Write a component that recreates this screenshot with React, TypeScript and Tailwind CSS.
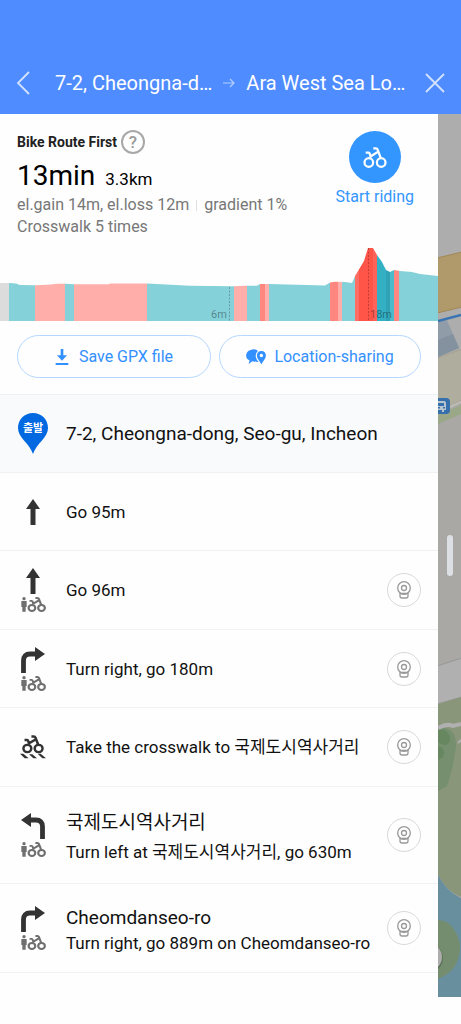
import React from "react";

type Maneuver = "straight" | "right" | "left" | "crosswalk";

type Step = {
  maneuver: Maneuver;
  title?: string;
  text: string;
  shared?: boolean;
  camera?: boolean;
};

const steps: Step[] = [
  { maneuver: "straight", text: "Go 95m" },
  { maneuver: "straight", text: "Go 96m", shared: true, camera: true },
  { maneuver: "right", text: "Turn right, go 180m", shared: true, camera: true },
  { maneuver: "crosswalk", text: "Take the crosswalk to 국제도시역사거리", camera: true },
  {
    maneuver: "left",
    title: "국제도시역사거리",
    text: "Turn left at 국제도시역사거리, go 630m",
    shared: true,
    camera: true,
  },
  {
    maneuver: "right",
    title: "Cheomdanseo-ro",
    text: "Turn right, go 889m on Cheomdanseo-ro",
    shared: true,
    camera: true,
  },
];

function BikeShape({ weight }: { weight: number }) {
  return (
    <g fill="none" stroke="currentColor" strokeWidth={weight} strokeLinejoin="round">
      <circle cx="16" cy="45" r="12.5" />
      <circle cx="52" cy="45" r="12.5" />
      <path d="M29 4h7q5 0 6 4l9 25M7 16h8q3 0 4 4l3 11M19 29l23-15" />
    </g>
  );
}

function BikeIcon() {
  return (
    <svg viewBox="0 0 68 61" className="h-[21px] w-6" aria-hidden="true">
      <BikeShape weight={6.5} />
    </svg>
  );
}

function SharedPathIcon() {
  return (
    <svg viewBox="0 0 75 45" className="h-[15px] w-[25px] text-[#6f6f6f]" aria-hidden="true">
      <circle cx="9" cy="5" r="5" fill="currentColor" />
      <path d="M1 12h16v18h-3v14H4V30H1z" fill="currentColor" />
      <g transform="translate(20 0) scale(.8 .73)">
        <BikeShape weight={8} />
      </g>
    </svg>
  );
}

function ManeuverIcon({ kind }: { kind: Maneuver }) {
  if (kind === "straight") {
    return (
      <svg viewBox="0 0 24 26" className="h-[26px] w-6" aria-hidden="true">
        <path d="M12 0l7 10h-4.500V26h-5V10H5z" fill="#333333" />
      </svg>
    );
  }
  if (kind === "crosswalk") {
    return (
      <svg viewBox="0 0 78 70" className="h-6 w-[26px] text-[#333333]" aria-hidden="true">
        <g transform="translate(7 0) scale(.94 .88)">
          <BikeShape weight={8} />
        </g>
        <g fill="currentColor">
          <path d="M0 55h10l16 14H14zM27 57h10l14 12H40zM53 55h9l16 14H67z" />
        </g>
      </svg>
    );
  }
  return (
    <svg viewBox="0 0 24 26" className={kind === "left" ? "h-[26px] w-6 -scale-x-100" : "h-[26px] w-6"} aria-hidden="true">
      <path d="M2.500 26V13.500q0-6.500 6.500-6.500h6" fill="none" stroke="#333333" strokeWidth="4.800" />
      <path d="M14 0l10 7-10 7z" fill="#333333" />
    </svg>
  );
}

function CameraIcon() {
  return (
    <svg viewBox="0 0 14 18" className="h-[18px] w-3.5" fill="none" stroke="#999999" strokeWidth="1.300" aria-hidden="true">
      <circle cx="7" cy="7" r="6.300" />
      <circle cx="7" cy="7" r="2.500" />
      <path d="M3 12.500h8M3 12v3q0 2 2 2h4q2 0 2-2v-3" />
    </svg>
  );
}

const profile =
  "M0 36L9 36 16 36.500 20 38 35 38.300 48 37.700 58 36.800 65 36.800 74 37.300 109 37.300 110 36.500 147 36.500 190 38.700 229 39.300 234 39.300 245 38.800 257 38.800 260 37 269 37 325 38.500 330 35.500 335 34.700 345 35 352 36 355 29 364 14 368 1 373 1 377 8 382 15 386 23 390 25 394 23 400 24 412 25 420 27 438 29V74H0z";

const segments = [
  { x: 0, w: 9, c: "#dcdcdc" },
  { x: 9, w: 26, c: "#84d1da" },
  { x: 35, w: 30, c: "#ffaeaa" },
  { x: 65, w: 9, c: "#84d1da" },
  { x: 74, w: 73, c: "#ffaeaa" },
  { x: 147, w: 87, c: "#84d1da" },
  { x: 234, w: 13, c: "#ffaeaa" },
  { x: 247, w: 13, c: "#84d1da" },
  { x: 260, w: 5, c: "#ff8780" },
  { x: 265, w: 4, c: "#ffaeaa" },
  { x: 269, w: 61, c: "#84d1da" },
  { x: 330, w: 8, c: "#ff8780" },
  { x: 338, w: 4, c: "#ffaeaa" },
  { x: 342, w: 13, c: "#84d1da" },
  { x: 355, w: 4, c: "#ff6e64" },
  { x: 359, w: 14, c: "#ff5549" },
  { x: 373, w: 4, c: "#ff6258" },
  { x: 377, w: 9, c: "#34b0c5" },
  { x: 386, w: 4, c: "#2fa3b5" },
  { x: 390, w: 4, c: "#4bbac9" },
  { x: 394, w: 5, c: "#ff8780" },
  { x: 399, w: 39, c: "#84d1da" },
];

function ElevationChart() {
  return (
    <svg viewBox="0 0 438 74" className="mt-[10px] block w-full" role="img" aria-label="Elevation profile">
      <defs>
        <clipPath id="profile">
          <path d={profile} />
        </clipPath>
      </defs>
      <g clipPath="url(#profile)" shapeRendering="crispEdges">
        {segments.map((s) => (
          <rect key={s.x} x={s.x} y="0" width={s.w} height="74" fill={s.c} />
        ))}
      </g>
      <g stroke="#000000" strokeOpacity=".25" strokeDasharray="2 1.500">
        <path d="M229.500 40V74M368.500 1V74" />
      </g>
      <g fill="#000000" fillOpacity=".38" fontSize="11">
        <text x="211" y="71">6m</text>
        <text x="370" y="71">18m</text>
      </g>
    </svg>
  );
}

function MapStrip() {
  return (
    <svg viewBox="0 0 23 883" preserveAspectRatio="none" className="absolute inset-0 h-full w-full" aria-hidden="true">
      <path fill="#adadad" d="M0 0h23v883H0z" />
      <path fill="#b09a6c" stroke="#a18853" d="M-1 144l25-6v55L-1 199z" />
      <path fill="#909da8" d="M0 207l8-3 13 30-21 9z" />
      <path fill="#84929f" d="M0 226l15-6 6 14-21 9z" />
      <path stroke="#3a74b2" strokeWidth="2.500" d="M0 207l23-6" />
      <path fill="#afad9e" stroke="#a49a88" strokeWidth=".7" d="M-1 244l25-9v51l-25 13z" />
      <path fill="#a9a8a4" d="M0 299l23-12v265H0z" />
      <path fill="#9aa887" d="M0 301l23-10v9L0 310z" />
      <path stroke="#bcbcb9" strokeWidth="2" d="M10 294l13-6" />
      <rect x="-8" y="284" width="20" height="16" rx="4" fill="#356fac" />
      <path fill="#b8c4ce" d="M0 287h6q2 0 2 2v7H6v2H4v-2H0z" />
      <path fill="#356fac" d="M0 289h6v3H0zM0 293h2v1.500H0zM5 293h2v1.500H5z" />
      <path fill="#b0b0b0" stroke="#979797" d="M-1 552l25-8v39l-25 7z" />
      <path fill="#89967a" d="M0 590l23-7v200Q9 778 0 761z" />
      <path fill="#758f6f" d="M0 614q18-2 18 18-3 24-9 40l-9 5z" />
      <path fill="#668760" d="M0 617q8-4 12 6 0 9-6 8-3-1-6-3zM0 632q9 3 5 11l-5 3z" />
      <path fill="none" stroke="#b0b0b0" strokeWidth="4" d="M0 614q9-5 15-2l8-2" />
      <path stroke="#b0b0b0" strokeWidth="2" d="M20 629l3-3" />
      <path fill="#688f9e" d="M0 761q9 17 23 23v99H0z" />
      <path fill="#758d6f" d="M0 806q16 0 22 24 1 26-22 35z" />
      <circle cx="-10" cy="844" r="15" fill="#5c7258" />
      <circle cx="-10" cy="843" r="14" fill="#adadad" />
    </svg>
  );
}

export default function App() {
  return (
    <div className="flex min-h-screen flex-col bg-[#fefefe] font-['Roboto','Noto_Sans_CJK_KR',sans-serif] text-[#111111]">
      <header className="flex h-[114px] shrink-0 items-end bg-[#4f8cff] px-4 pb-[15px] text-white">
        <button type="button" aria-label="Back" className="flex h-8 w-[39px] items-center">
          <svg viewBox="0 0 14 24" className="h-6 w-3.5" fill="none" stroke="#d3e2ff" strokeWidth="1.800" aria-hidden="true">
            <path d="M13 1L2 12l11 11" />
          </svg>
        </button>
        <h1 className="flex flex-1 items-center text-[20px] leading-8 whitespace-nowrap">
          <span>7-2, Cheongna-d…</span>
          <svg viewBox="0 0 12 10" className="mx-[11px] h-2.5 w-3" fill="none" stroke="#b4cfff" strokeWidth="1.200" aria-label="to">
            <path d="M0 5h11M7 1l4 4-4 4" />
          </svg>
          <span>Ara West Sea Lo…</span>
        </h1>
        <button type="button" aria-label="Close" className="flex h-8 w-5 items-center justify-center">
          <svg viewBox="0 0 20 20" className="h-5 w-5" fill="none" stroke="#d3e2ff" strokeWidth="1.800" aria-hidden="true">
            <path d="M1 1l18 18M19 1L1 19" />
          </svg>
        </button>
      </header>

      <div className="flex flex-1 pb-[27px]">
        <main className="min-w-0 flex-1">
          <section className="flex justify-between pt-4 pr-6 pl-[17px]">
            <div>
              <div className="flex items-center gap-1">
                <h2 className="text-[14px] leading-6 font-bold text-[#222222]">Bike Route First</h2>
                <button type="button" aria-label="Help" className="flex h-6 w-6 items-center justify-center rounded-full border-2 border-[#a8a8a8] text-[17px] leading-5 font-medium text-[#999999]">
                  ?
                </button>
              </div>
              <p className="flex items-baseline gap-[10px] pt-[7px] leading-[30px] text-black">
                <span className="text-[28px]">13min</span>
                <span className="text-[17px]">3.3km</span>
              </p>
              <p className="flex items-center text-[16px] leading-[22px] text-[#777777]">
                <span>el.gain 14m, el.loss 12m</span>
                <span className="mx-[7px] h-[11px] w-px bg-[#e0e0e0]" />
                <span>gradient 1%</span>
              </p>
              <p className="text-[16px] leading-[21px] text-[#777777]">Crosswalk 5 times</p>
            </div>
            <button type="button" className="flex flex-col items-center self-start pt-px text-[16px] leading-6 text-[#3396ff]">
              <span className="mb-[2px] flex h-[52px] w-[52px] items-center justify-center rounded-full bg-[#3396ff] text-white">
                <BikeIcon />
              </span>
              Start riding
            </button>
          </section>

          <ElevationChart />

          <div className="flex gap-2 px-[17px] pt-[14px] pb-4 text-[16px] text-[#3390ff]">
            <button type="button" className="flex h-[43px] w-0 grow-[24] items-center justify-center gap-[10px] rounded-full border border-[#b5d7ff]">
              <svg viewBox="0 0 40 48" className="h-4 w-3.5" fill="currentColor" aria-hidden="true">
                <path d="M16 0h8v19h11L20 35 5 19h11zM1 42h38v6H1z" />
              </svg>
              Save GPX file
            </button>
            <button type="button" className="flex h-[43px] w-0 grow-[25] items-center justify-center gap-2 rounded-full border border-[#b5d7ff]">
              <svg viewBox="0 0 57 46" className="h-4 w-5" fill="currentColor" aria-hidden="true">
                <path d="M21 1Q29 0 34 6q-8 6-6 17 2 9 8 14-5 1-9-1-5 1-9-1L7 43l3-10Q0 29 0 18 2 3 21 1z" />
                <path fillRule="evenodd" d="M44 6c8 0 13 6 13 13 0 9-8 16-13 25-5-9-13-16-13-25C31 12 36 6 44 6zm0 8a5 5 0 1 0 0 10 5 5 0 0 0 0-10z" />
              </svg>
              Location-sharing
            </button>
          </div>

          <div className="flex h-[79px] items-center border-y border-[#f0f1f3] bg-[#f8fafc] px-[17px]">
            <svg viewBox="0 0 32 42" className="h-[42px] w-8 shrink-0" role="img" aria-label="출발">
              <path fill="#0069e2" d="M16 0c8.500 0 15 6.500 15 15 0 10-11.500 15-15 26C12.500 30 1 25 1 15 1 6.500 7.500 0 16 0z" />
              <text x="16" y="19" textAnchor="middle" fontSize="11" fontWeight="700" fill="#ffffff">출발</text>
            </svg>
            <p className="ml-[17px] text-[19px] leading-6">7-2, Cheongna-dong, Seo-gu, Incheon</p>
          </div>

          <ol>
            {steps.map((s, i) => (
              <li
                key={i}
                className={
                  "flex items-center border-b border-[#f2f2f2] px-[17px] " +
                  (s.maneuver === "left" ? "h-[97px]" : s.title ? "h-[89px]" : "h-[78px] even:h-[79px]")
                }
              >
                <div className="flex w-8 shrink-0 flex-col items-center gap-[3px]">
                  <ManeuverIcon kind={s.maneuver} />
                  {s.shared && <SharedPathIcon />}
                </div>
                <div
                  className={
                    "ml-[17px] min-w-0 flex-1 whitespace-nowrap " +
                    (s.maneuver === "left" ? "space-y-1 pt-1" : s.title ? "pt-1" : "")
                  }
                >
                  {s.title && <p className="text-[19px] leading-[26px]">{s.title}</p>}
                  <p className="text-[17px] leading-6">{s.text}</p>
                </div>
                {s.camera && (
                  <button type="button" aria-label="Street view" className="flex h-[34px] w-[34px] shrink-0 items-center justify-center rounded-full border border-[#d9d9d9]">
                    <CameraIcon />
                  </button>
                )}
              </li>
            ))}
          </ol>
        </main>

        <aside aria-label="Map" className="relative w-[23px] shrink-0 overflow-hidden">
          <MapStrip />
          <div className="absolute top-[421px] left-[9px] h-[41px] w-[6px] rounded-full bg-[#dcdfe3]" />
        </aside>
      </div>
    </div>
  );
}
